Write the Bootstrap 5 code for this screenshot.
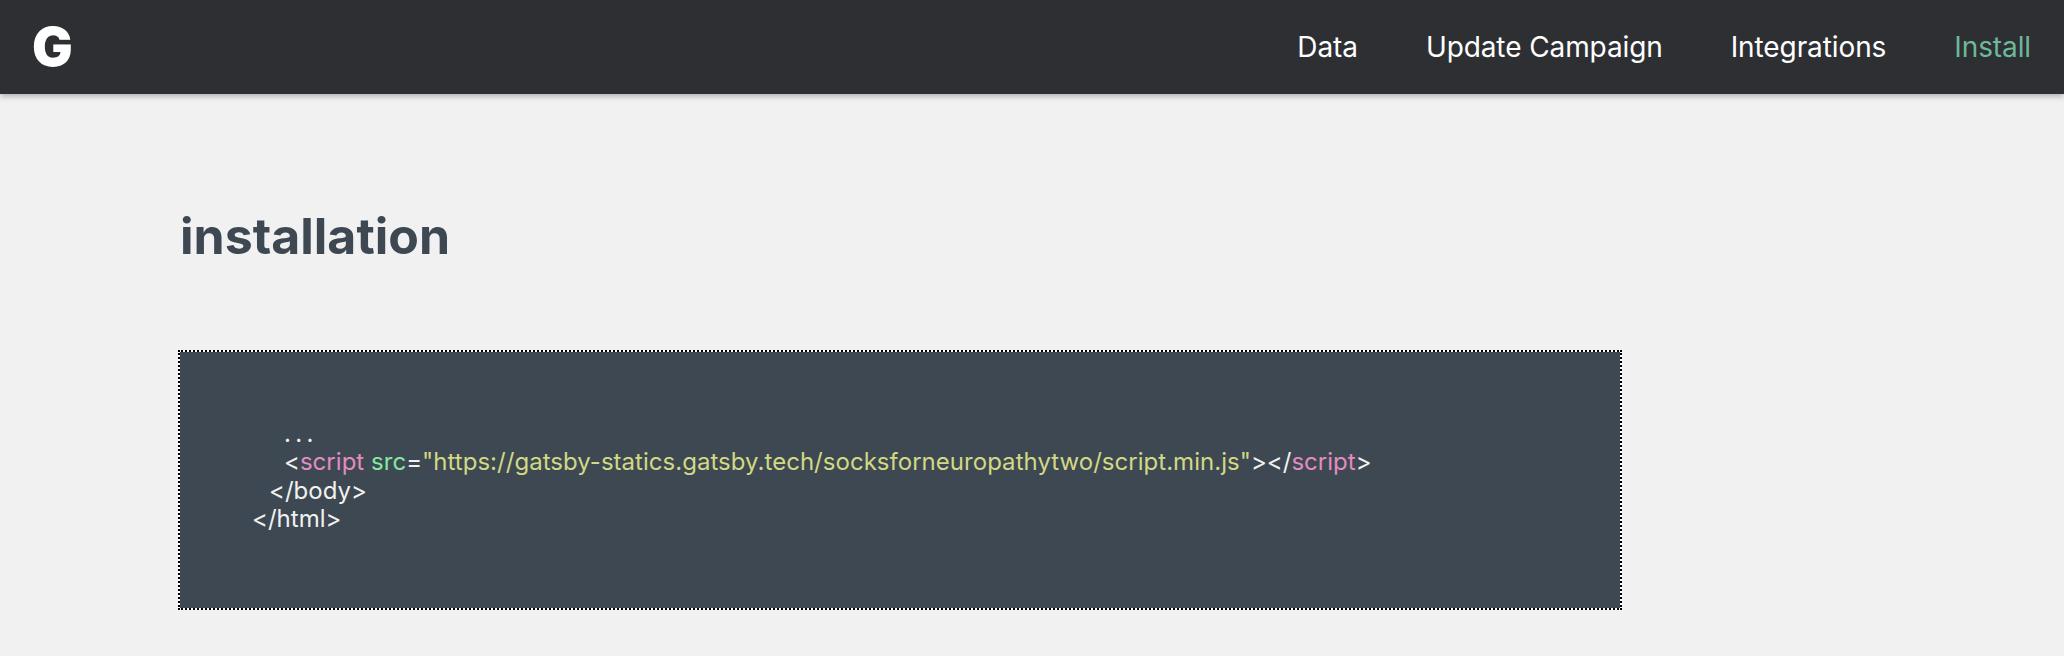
<!DOCTYPE html>
<html lang="en">
<head>
<meta charset="utf-8">
<title>installation</title>
<link href="https://cdn.jsdelivr.net/npm/bootstrap@5.3.0/dist/css/bootstrap.min.css" rel="stylesheet">
<style>
html, body { height: 100%; }
body { background: #f1f1f1; font-family: Inter, "Liberation Sans", sans-serif; overflow: hidden; }
.top-bar { height: 94px; background: #2e2f33; box-shadow: 0 2px 6px rgba(0,0,0,.3); padding: 0 33px 0 32px; }
.logo-g { font-size: 54px; font-weight: 900; color: #fff; line-height: 1; }
.top-bar .nav { gap: 68px; }
.top-bar .nav-link { padding: 0; font-size: 28px; font-weight: 400; letter-spacing: -.1px; color: #fff; }
.top-bar .nav-link.active { color: #6cb89a; }
.page-body { padding: 0 0 0 178px; }
.page-title { margin: 0 0 0 2px; padding-top: 112px; font-size: 50px; line-height: 1.2; font-weight: 700; color: #3d4852; height: 256px; }
.code-box { width: 1444px; height: 260px; border: 2px dotted #000; background: linear-gradient(#3d4852,#3d4852) padding-box, linear-gradient(#fff,#fff) border-box; padding-top: 68px; font-size: 24px; font-weight: 400; letter-spacing: .03px; line-height: 28.3px; color: #f1f1f1; }
.code-line { white-space: nowrap; }
.ind-a { padding-left: 104px; }
.ind-b { padding-left: 89px; }
.ind-c { padding-left: 72px; }
.dots-line { word-spacing: -2.5px; }
.tk-tag { color: #e38cc0; }
.tk-attr { color: #84e8a0; }
.tk-str { color: #d2d884; }
</style>
</head>
<body>
<nav class="top-bar d-flex align-items-center justify-content-between">
  <a class="logo-g text-decoration-none" href="#">G</a>
  <ul class="nav">
    <li class="nav-item"><a class="nav-link" href="#">Data</a></li>
    <li class="nav-item"><a class="nav-link" href="#">Update Campaign</a></li>
    <li class="nav-item"><a class="nav-link" href="#">Integrations</a></li>
    <li class="nav-item"><a class="nav-link active" href="#">Install</a></li>
  </ul>
</nav>
<main class="page-body">
  <h1 class="page-title">installation</h1>
  <div class="code-box">
    <div class="code-line ind-a dots-line">. . .</div>
    <div class="code-line ind-a">&lt;<span class="tk-tag">script</span> <span class="tk-attr">src</span>=<span class="tk-str">"https://gatsby-statics.gatsby.tech/socksforneuropathytwo/script.min.js"</span>&gt;&lt;/<span class="tk-tag">script</span>&gt;</div>
    <div class="code-line ind-b">&lt;/body&gt;</div>
    <div class="code-line ind-c">&lt;/html&gt;</div>
  </div>
</main>
<script src="https://cdn.jsdelivr.net/npm/bootstrap@5.3.0/dist/js/bootstrap.bundle.min.js"></script>
</body>
</html>
